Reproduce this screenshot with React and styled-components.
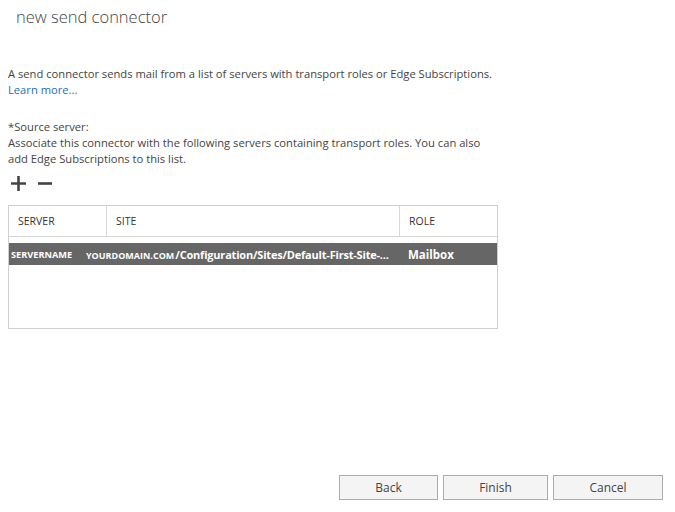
import React from "react";
import styled, { createGlobalStyle } from "styled-components";

const GlobalStyle = createGlobalStyle`
  html, body {
    margin: 0;
    padding: 0;
    background: #ffffff;
  }
  body {
    font-family: "Open Sans", "Liberation Sans", sans-serif;
    color: #444;
  }
`;

const Page = styled.div`
  width: 675px;
  height: 512px;
  box-sizing: border-box;
  display: flex;
  flex-direction: column;
  padding: 0 12px 0 8px;
`;

const Title = styled.h1`
  margin: 4px 0 0 8px;
  font-size: 16.5px;
  font-weight: 300;
  color: #444;
  line-height: 26px;
`;

const Text = styled.p`
  margin: ${(p) => p.$margin || "0"};
  font-size: 11.2px;
  line-height: 16px;
  color: #444;
  max-width: 490px;
`;

const Link = styled.a`
  color: #1e6eb6;
  text-decoration: none;
  cursor: pointer;
`;

const Toolbar = styled.div`
  display: flex;
  align-items: center;
  gap: 10px;
  margin: 8px 0 0 2px;
  height: 16px;
`;

const ToolButton = styled.button`
  border: 0;
  padding: 0;
  background: none;
  display: flex;
  cursor: pointer;
`;

const Table = styled.div`
  margin-top: 14px;
  width: 490px;
  height: 124px;
  border: 1px solid #cfcfcf;
  box-sizing: border-box;
  display: flex;
  flex-direction: column;
`;

const HeaderRow = styled.div`
  display: grid;
  grid-template-columns: 98px 293px 1fr;
  height: 30px;
  border-bottom: 1px solid #d4d4d4;
`;

const HeaderCell = styled.div`
  display: flex;
  align-items: center;
  padding-left: 9px;
  font-size: 10.5px;
  color: #333;
  border-right: ${(p) => (p.$last ? "none" : "1px solid #d8d8d8")};
`;

const Row = styled.div`
  display: grid;
  grid-template-columns: 77px 322px 1fr;
  height: 22px;
  margin-top: 6px;
  background: ${(p) => (p.$selected ? "#666666" : "transparent")};
  color: ${(p) => (p.$selected ? "#ffffff" : "#444")};
  font-weight: 700;
  align-items: center;
`;

const Cell = styled.div`
  padding-left: ${(p) => p.$pad || "0"};
  font-size: ${(p) => p.$size || "11px"};
  letter-spacing: ${(p) => p.$tight || "0"};
  white-space: nowrap;
  overflow: hidden;
`;

const Small = styled.span`
  font-size: 9px;
  letter-spacing: 0;
  margin-right: 1px;
`;

const Spacer = styled.div`
  flex: 1;
`;

const Footer = styled.div`
  display: flex;
  justify-content: flex-end;
  gap: 5px;
  margin-bottom: 12px;
`;

const Button = styled.button`
  width: ${(p) => p.$w}px;
  height: 25px;
  background: #f4f4f4;
  border: 1px solid #acacac;
  font-family: inherit;
  font-size: 12px;
  color: #444;
  cursor: pointer;
  padding: 0;
`;

const PlusIcon = () => (
  <svg width="17" height="17" viewBox="0 0 17 17">
    <path d="M8.5 1v15M1 8.5h15" stroke="#444" strokeWidth="2.6" />
  </svg>
);

const MinusIcon = () => (
  <svg width="16" height="17" viewBox="0 0 16 17">
    <path d="M1 8.5h14" stroke="#444" strokeWidth="2.6" />
  </svg>
);

export default function App() {
  return (
    <>
      <GlobalStyle />
      <Page>
        <Title>new send connector</Title>
        <Text $margin="36px 0 0 0">
          A send connector sends mail from a list of servers with transport roles or Edge
          Subscriptions.
          <br />
          <Link>Learn more...</Link>
        </Text>
        <Text $margin="21px 0 0 0">
          *Source server:
          <br />
          Associate this connector with the following servers containing transport roles. You can
          also add Edge Subscriptions to this list.
        </Text>
        <Toolbar>
          <ToolButton aria-label="add">
            <PlusIcon />
          </ToolButton>
          <ToolButton aria-label="remove">
            <MinusIcon />
          </ToolButton>
        </Toolbar>
        <Table>
          <HeaderRow>
            <HeaderCell>SERVER</HeaderCell>
            <HeaderCell>SITE</HeaderCell>
            <HeaderCell $last>ROLE</HeaderCell>
          </HeaderRow>
          <Row $selected>
            <Cell $pad="2px" $size="9.2px">SERVERNAME</Cell>
            <Cell $tight="-0.2px">
              <Small>YOURDOMAIN.COM</Small>/Configuration/Sites/Default-First-Site-...
            </Cell>
            <Cell $pad="0px" $size="11.5px">Mailbox</Cell>
          </Row>
        </Table>
        <Spacer />
        <Footer>
          <Button $w={99}>Back</Button>
          <Button $w={105}>Finish</Button>
          <Button $w={110}>Cancel</Button>
        </Footer>
      </Page>
    </>
  );
}
